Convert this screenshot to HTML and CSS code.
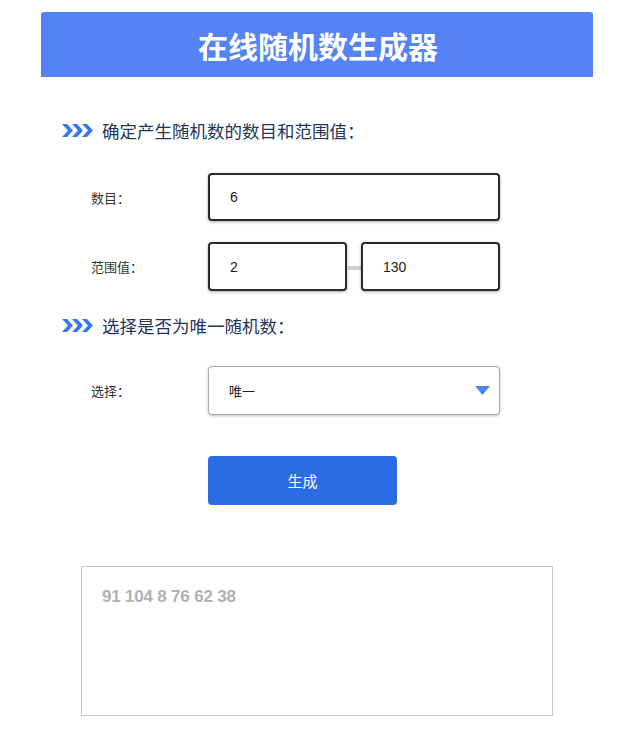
FILE: index.html
```html
<!DOCTYPE html>
<html lang="zh-CN">
<head>
<meta charset="utf-8">
<title>在线随机数生成器</title>
<link rel="stylesheet" href="styles.css">
</head>
<body>
<div class="page">
  <header class="banner">在线随机数生成器</header>

  <h2 class="section-title">
    <svg class="chevrons" width="32" height="13" viewBox="0 0 32 13">
      <path d="M0 0h5l6 6.5-6 6.5h-5l6-6.5z"/>
      <path d="M10 0h5l6 6.5-6 6.5h-5l6-6.5z"/>
      <path d="M20 0h5l6 6.5-6 6.5h-5l6-6.5z"/>
    </svg>
    确定产生随机数的数目和范围值：
  </h2>

  <div class="form-row row-count">
    <label class="label">数目：</label>
    <div class="field">
      <div class="box box-strong box-wide">6</div>
    </div>
  </div>

  <div class="form-row row-range">
    <label class="label">范围值：</label>
    <div class="field range">
      <div class="box box-strong box-half">2</div>
      <span class="dash"></span>
      <div class="box box-strong box-half">130</div>
    </div>
  </div>

  <h2 class="section-title title-second">
    <svg class="chevrons" width="32" height="13" viewBox="0 0 32 13">
      <path d="M0 0h5l6 6.5-6 6.5h-5l6-6.5z"/>
      <path d="M10 0h5l6 6.5-6 6.5h-5l6-6.5z"/>
      <path d="M20 0h5l6 6.5-6 6.5h-5l6-6.5z"/>
    </svg>
    选择是否为唯一随机数：
  </h2>

  <div class="form-row row-select">
    <label class="label">选择：</label>
    <div class="field">
      <div class="box box-select box-wide">
        <span>唯一</span>
        <svg class="caret" width="15" height="9" viewBox="0 0 15 9"><path d="M0 0h15l-7.5 9z"/></svg>
      </div>
    </div>
  </div>

  <div class="actions">
    <button class="btn" type="button">生成</button>
  </div>

  <div class="result">91 104 8 76 62 38</div>
</div>
</body>
</html>
```

FILE: styles.css
```css
* {
  box-sizing: border-box;
}

body {
  margin: 0;
  background: #ffffff;
  font-family: "Liberation Sans", "Noto Sans CJK SC", sans-serif;
  color: #333333;
}

.page {
  width: 552px;
  margin: 12px 0 0 41px;
  padding-bottom: 20px;
}

.banner {
  height: 65px;
  background: #5583f5;
  border-radius: 3px 3px 0 0;
  color: #ffffff;
  font-family: "Noto Sans CJK SC", sans-serif;
  font-size: 30px;
  font-weight: 700;
  display: flex;
  align-items: center;
  justify-content: center;
  padding-left: 2px;
}

.section-title {
  margin: 41px 0 0 21px;
  height: 24px;
  display: flex;
  align-items: center;
  gap: 8px;
  font-family: "Noto Sans CJK SC", sans-serif;
  font-size: 17.5px;
  font-weight: 400;
  color: #26365a;
}

.title-second {
  margin-top: 22px;
}

.chevrons {
  fill: #3676ee;
  flex: none;
}

.form-row {
  display: flex;
  align-items: center;
  padding-left: 50px;
}

.row-count {
  margin-top: 31px;
}

.row-range {
  margin-top: 21px;
}

.row-select {
  margin-top: 29px;
}

.label {
  width: 117px;
  font-family: "Noto Sans CJK SC", sans-serif;
  font-size: 13px;
  color: #333333;
}

.field {
  display: flex;
  align-items: center;
}

.box {
  height: 48px;
  background: #ffffff;
  border-radius: 4px;
  display: flex;
  align-items: center;
  padding-left: 20px;
  font-size: 14px;
  color: #222222;
}

.box-strong {
  border: 2px solid #2b2b2b;
  box-shadow: 0 1px 3px rgba(0, 0, 0, 0.35);
}

.box-wide {
  width: 292px;
}

.range .box-strong {
  height: 49px;
}

.box-half {
  width: 139px;
}

.dash {
  width: 14px;
  height: 4px;
  background: #cfcfcf;
  margin-top: 2px;
}

.box-select {
  height: 49px;
  border: 1px solid #a8a8a8;
  box-shadow: 0 1px 3px rgba(0, 0, 0, 0.25);
  justify-content: space-between;
  padding-right: 9px;
  font-family: "Noto Sans CJK SC", sans-serif;
  font-size: 13px;
}

.caret {
  fill: #4a86ef;
}

.actions {
  margin-top: 41px;
  padding-left: 167px;
}

.btn {
  width: 189px;
  height: 49px;
  border: none;
  border-radius: 4px;
  background: #2a6de2;
  color: #ffffff;
  font-family: "Noto Sans CJK SC", sans-serif;
  font-size: 15px;
  cursor: pointer;
}

.result {
  margin: 61px 0 0 40px;
  width: 472px;
  height: 150px;
  border: 1px solid #c9c9c9;
  padding: 21px 20px;
  font-size: 17px;
  font-weight: 700;
  color: #b0b2b6;
  line-height: 18px;
  letter-spacing: -0.2px;
}
```
